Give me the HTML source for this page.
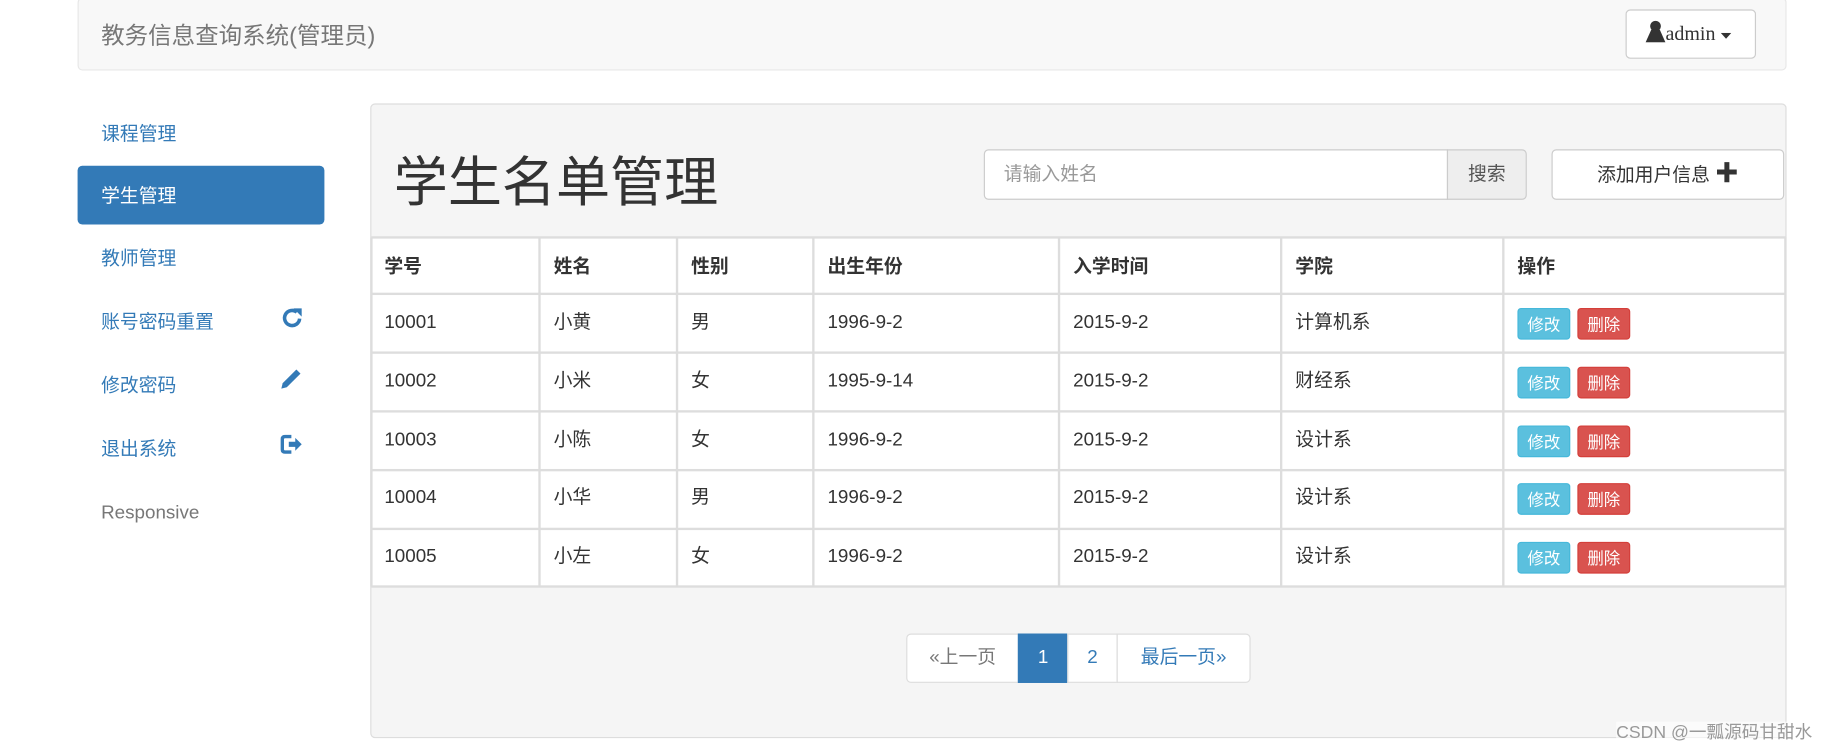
<!DOCTYPE html>
<html><head><meta charset="utf-8"><style>
html,body{margin:0;padding:0;width:1843px;height:752px;overflow:hidden;background:#fff}
#w{position:absolute;left:0;top:0;width:1568px;height:640px;transform:scale(1.17538);transform-origin:0 0;font-family:"Liberation Sans","Noto Sans CJK SC",sans-serif;color:#333;font-size:16px}
.a{position:absolute;box-sizing:border-box}
.nav{left:66px;top:-2px;width:1454px;height:62px;background:#f8f8f8;border:1px solid #e7e7e7;border-radius:4px}
.side{left:86px;color:#337ab7;font-size:16px;line-height:20px}
.th,.td{position:absolute;font-size:16px;line-height:20px}
.th{font-weight:bold}
.btn{position:absolute;width:45px;height:27px;border-radius:3px;color:#fff;font-size:14px;line-height:27px;text-align:center;box-sizing:border-box}
.bi{background:#5bc0de;border:1px solid #46b8da}
.bd{background:#d9534f;border:1px solid #d43f3a}
.vl{position:absolute;top:202px;width:2px;height:297px;background:#ddd}
.hl{position:absolute;left:316px;width:1203px;height:2px;background:#ddd}
.pg{position:absolute;top:539px;height:42px;border:1px solid #ddd;background:#fff;color:#337ab7;line-height:40px;text-align:center;box-sizing:border-box;font-size:16px}
</style></head><body><div id="w">
<div class="a nav"></div>
<div class="a" style="left:86px;top:17px;font-size:20px;color:#777;line-height:28px">教务信息查询系统(管理员)</div>
<div class="a" style="left:1383px;top:8px;width:111px;height:42px;border:1px solid #ccc;border-radius:4px;background:#fff;font-family:'Liberation Serif',serif;font-size:17px;line-height:40px;padding-left:16px;color:#333">
<svg width="17" height="19" viewBox="0 0 16 18" style="vertical-align:-2px"><circle cx="8" cy="5" r="4.3" fill="#333"/><path d="M4.5 8 L11.5 8 L16 18 L0 18 Z" fill="#333"/></svg>admin <svg width="9" height="6" viewBox="0 0 9 6"><path d="M0 0H9L4.5 5Z" fill="#333"/></svg></div>

<div class="a side" style="top:105px">课程管理</div>
<div class="a" style="left:66px;top:141px;width:210px;height:50px;background:#337ab7;border-radius:4px"></div>
<div class="a side" style="top:158px;color:#fff">学生管理</div>
<div class="a side" style="top:211px">教师管理</div>
<div class="a side" style="top:265px">账号密码重置</div>
<div class="a side" style="top:319px">修改密码</div>
<div class="a side" style="top:373px">退出系统</div>
<div class="a side" style="top:427px;color:#777">Responsive</div>
<svg class="a" style="left:238px;top:260px" width="21" height="21" viewBox="0 0 18 18"><path d="M14.5 9.5A5.5 5.5 0 1 1 12.5 4.8" fill="none" stroke="#337ab7" stroke-width="2.6"/><path d="M10 2H16V8Z" fill="#337ab7"/></svg>
<svg class="a" style="left:237px;top:312px" width="21" height="21" viewBox="0 0 18 18"><path d="M13 2L16 5L6 15L2 16L3 12Z" fill="#337ab7"/></svg>
<svg class="a" style="left:238px;top:368px" width="22" height="20" viewBox="0 0 20 18"><path d="M9 3H4Q2 3 2 5V13Q2 15 4 15H9" fill="none" stroke="#337ab7" stroke-width="2.6"/><path d="M7 7H12V4L17 9L12 14V11H7Z" fill="#337ab7"/></svg>

<div class="a" style="left:315px;top:88px;width:1205px;height:540px;background:#f5f5f5;border:1px solid #ddd;border-radius:4px"></div>
<div class="a" style="left:335px;top:128px;font-size:46px;line-height:54px;color:#333">学生名单管理</div>
<div class="a" style="left:837px;top:127px;width:395px;height:43px;background:#fff;border:1px solid #ccc;border-radius:4px 0 0 4px;color:#999;line-height:41px;padding-left:16px">请输入姓名</div>
<div class="a" style="left:1231px;top:127px;width:68px;height:43px;background:#eee;border:1px solid #ccc;border-radius:0 4px 4px 0;color:#555;line-height:41px;text-align:center">搜索</div>
<div class="a" style="left:1320px;top:127px;width:198px;height:43px;background:#fff;border:1px solid #ccc;border-radius:4px;line-height:41px;text-align:center">添加用户信息 <b style="font-size:20px">✚</b></div>

<div class="a" style="left:316px;top:202px;width:1203px;height:297px;background:#fff"></div>
<div class="hl" style="top:201px"></div><div class="hl" style="top:249px"></div><div class="hl" style="top:299px"></div><div class="hl" style="top:349px"></div><div class="hl" style="top:399px"></div><div class="hl" style="top:449px"></div><div class="hl" style="top:498px"></div>
<div class="vl" style="left:315px"></div><div class="vl" style="left:458px"></div><div class="vl" style="left:575px"></div><div class="vl" style="left:691px"></div><div class="vl" style="left:900px"></div><div class="vl" style="left:1089px"></div><div class="vl" style="left:1278px"></div><div class="vl" style="left:1518px"></div>

<div class="th" style="left:327px;top:218px">学号</div><div class="th" style="left:471px;top:218px">姓名</div><div class="th" style="left:588px;top:218px">性别</div><div class="th" style="left:704px;top:218px">出生年份</div><div class="th" style="left:913px;top:218px">入学时间</div><div class="th" style="left:1102px;top:218px">学院</div><div class="th" style="left:1291px;top:218px">操作</div>

<div class="td" style="left:327px;top:265px">10001</div><div class="td" style="left:471px;top:265px">小黄</div><div class="td" style="left:588px;top:265px">男</div><div class="td" style="left:704px;top:265px">1996-9-2</div><div class="td" style="left:913px;top:265px">2015-9-2</div><div class="td" style="left:1102px;top:265px">计算机系</div>
<div class="td" style="left:327px;top:315px">10002</div><div class="td" style="left:471px;top:315px">小米</div><div class="td" style="left:588px;top:315px">女</div><div class="td" style="left:704px;top:315px">1995-9-14</div><div class="td" style="left:913px;top:315px">2015-9-2</div><div class="td" style="left:1102px;top:315px">财经系</div>
<div class="td" style="left:327px;top:365px">10003</div><div class="td" style="left:471px;top:365px">小陈</div><div class="td" style="left:588px;top:365px">女</div><div class="td" style="left:704px;top:365px">1996-9-2</div><div class="td" style="left:913px;top:365px">2015-9-2</div><div class="td" style="left:1102px;top:365px">设计系</div>
<div class="td" style="left:327px;top:414px">10004</div><div class="td" style="left:471px;top:414px">小华</div><div class="td" style="left:588px;top:414px">男</div><div class="td" style="left:704px;top:414px">1996-9-2</div><div class="td" style="left:913px;top:414px">2015-9-2</div><div class="td" style="left:1102px;top:414px">设计系</div>
<div class="td" style="left:327px;top:464px">10005</div><div class="td" style="left:471px;top:464px">小左</div><div class="td" style="left:588px;top:464px">女</div><div class="td" style="left:704px;top:464px">1996-9-2</div><div class="td" style="left:913px;top:464px">2015-9-2</div><div class="td" style="left:1102px;top:464px">设计系</div>

<div class="btn bi" style="left:1291px;top:262px">修改</div><div class="btn bd" style="left:1342px;top:262px">删除</div>
<div class="btn bi" style="left:1291px;top:312px">修改</div><div class="btn bd" style="left:1342px;top:312px">删除</div>
<div class="btn bi" style="left:1291px;top:362px">修改</div><div class="btn bd" style="left:1342px;top:362px">删除</div>
<div class="btn bi" style="left:1291px;top:411px">修改</div><div class="btn bd" style="left:1342px;top:411px">删除</div>
<div class="btn bi" style="left:1291px;top:461px">修改</div><div class="btn bd" style="left:1342px;top:461px">删除</div>

<div class="pg" style="left:771px;width:96px;border-radius:4px 0 0 4px;color:#777">«上一页</div>
<div class="pg" style="left:866px;width:43px;background:#337ab7;border-color:#337ab7;color:#fff">1</div>
<div class="pg" style="left:908px;width:43px">2</div>
<div class="pg" style="left:950px;width:114px;border-radius:0 4px 4px 0">最后一页»</div>

<div class="a" style="left:1375px;top:614px;font-size:15px;color:#999;line-height:20px;background:rgba(255,255,255,0.6)">CSDN @一瓢源码甘甜水</div>
</div></body></html>
